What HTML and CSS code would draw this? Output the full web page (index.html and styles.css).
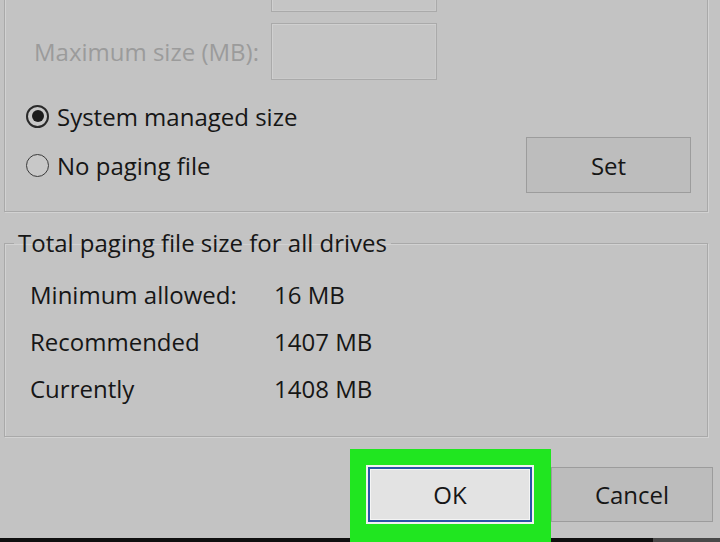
FILE: index.html
```html
<!DOCTYPE html>
<html lang="en">
<head>
<meta charset="utf-8">
<title>Virtual Memory</title>
<link rel="stylesheet" href="styles.css">
</head>
<body>
<div class="window">
  <section class="group custom">
    <div class="field-row">
      <span class="field-label"></span>
      <span class="input"></span>
    </div>
    <div class="field-row">
      <span class="field-label disabled">Maximum size (MB):</span>
      <span class="input"></span>
    </div>
    <div class="options">
      <div class="radios">
        <div class="radio-row"><span class="radio checked"></span>System managed size</div>
        <div class="radio-row"><span class="radio"></span>No paging file</div>
      </div>
      <button class="btn btn-set">Set</button>
    </div>
  </section>

  <fieldset class="group totals">
    <legend>Total paging file size for all drives</legend>
    <div class="stat-row"><span class="stat-label">Minimum allowed:</span><span>16 MB</span></div>
    <div class="stat-row"><span class="stat-label">Recommended</span><span>1407 MB</span></div>
    <div class="stat-row"><span class="stat-label">Currently</span><span>1408 MB</span></div>
  </fieldset>

  <div class="footer">
    <div class="highlight"><button class="btn btn-ok">OK</button></div>
    <button class="btn btn-cancel">Cancel</button>
  </div>
</div>
</body>
</html>
```

FILE: styles.css
```css
html, body {
  margin: 0;
  padding: 0;
}

body {
  background: #c3c3c3;
  font-family: "Open Sans", "Noto Sans", sans-serif;
  font-size: 24px;
  color: #161616;
}

.window {
  width: 720px;
  height: 542px;
  overflow: hidden;
  display: flex;
  flex-direction: column;
}

.group {
  margin: 0 12px 0 4px;
  border: 1px solid #a9a9a9;
  box-shadow: 1px 1px 0 #d2d2d2, inset 1px 1px 0 #d2d2d2;
}

.custom {
  margin-top: -62px;
  padding: 16px 16px 18px 21px;
  display: flex;
  flex-direction: column;
  gap: 11px;
}

.field-row {
  display: flex;
  align-items: center;
  padding-left: 8px;
}

.field-label {
  width: 237px;
  white-space: nowrap;
}

.disabled {
  color: #9b9b9b;
}

.input {
  width: 166px;
  height: 57px;
  box-sizing: border-box;
  border: 1px solid #aaaaaa;
  box-shadow: inset 1px 1px 0 #d0d0d0, inset -1px -1px 0 #cacaca;
  background: #c5c5c5;
}

.options {
  display: flex;
  align-items: flex-start;
  margin-top: 10px;
}

.radios {
  display: flex;
  flex-direction: column;
  gap: 19px;
  padding-bottom: 1px;
}

.radio-row {
  display: flex;
  align-items: center;
  gap: 8px;
  height: 30px;
  white-space: nowrap;
}

.radio {
  width: 23px;
  height: 23px;
  box-sizing: border-box;
  border-radius: 50%;
  border: 1.5px solid #3a3a3a;
  background: #c8c8c8;
  display: flex;
  align-items: center;
  justify-content: center;
}

.radio.checked {
  border: 2px solid #2a2a2a;
}

.radio.checked::after {
  content: "";
  width: 12px;
  height: 12px;
  border-radius: 50%;
  background: #1c1c1c;
}

.btn {
  font: inherit;
  color: #161616;
  box-sizing: border-box;
  padding: 0;
  cursor: default;
}

.btn-set {
  margin: 36px 0 0 auto;
  width: 165px;
  height: 56px;
  border: 1px solid #9c9c9c;
  background: #bdbdbd;
}

.totals {
  margin-top: 14px;
  padding: 11px 0 24px 0;
  min-width: 0;
}

.totals legend {
  margin-left: 9px;
  padding: 0 4px;
  line-height: 34px;
  white-space: nowrap;
}

.stat-row {
  display: flex;
  align-items: center;
  height: 47px;
  padding-left: 25px;
  white-space: nowrap;
}

.stat-label {
  width: 244px;
}

.footer {
  margin-top: 12px;
  height: 93px;
  flex: none;
  display: flex;
  align-items: flex-start;
  padding-left: 350px;
  background:
    linear-gradient(to right, #0f0f0f 0 653px, #484848 653px) bottom / 100% 4px no-repeat;
}

.highlight {
  background: #20e620;
  padding: 18px 19px 20px 18px;
  align-self: stretch;
}

.btn-ok {
  display: block;
  width: 164px;
  height: 55px;
  border: 2px solid #2757a6;
  outline: 2px solid #f2f2f2;
  background: #e3e3e3;
  box-shadow: inset 0 0 0 1px #f5f5f5;
}

.btn-cancel {
  margin-top: 18px;
  width: 162px;
  height: 55px;
  border: 1px solid #9c9c9c;
  background: #bcbcbc;
}
```
